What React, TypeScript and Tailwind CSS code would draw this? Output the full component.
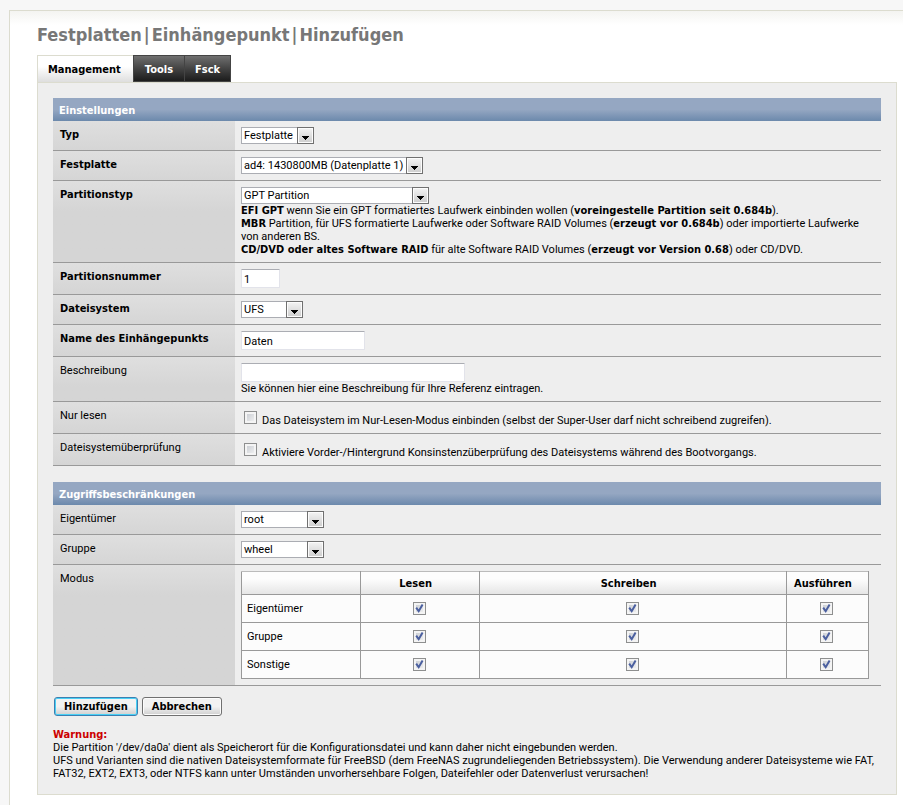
import type { ReactNode } from 'react';

const MODES = ['Eigentümer', 'Gruppe', 'Sonstige'];
const RIGHTS = ['Lesen', 'Schreiben', 'Ausführen'];

const Bold = ({ children }: { children: ReactNode }) => (
  <strong className="font-['DejaVu_Sans_Condensed',sans-serif] font-bold leading-none">{children}</strong>
);

type SelectProps = { id: string; options: string[]; width: string };

const Select = ({ id, options, width }: SelectProps) => (
  <span className={`relative block h-[17px] ${width}`}>
    <select
      id={id}
      className="block h-full w-full appearance-none border border-[#abadb3] bg-white pl-[2px] pr-[17px] pt-px leading-[14px] outline-none"
    >
      {options.map((option) => (
        <option key={option}>{option}</option>
      ))}
    </select>
    <span className="pointer-events-none absolute inset-y-0 right-0 flex w-[17px] items-end justify-center border border-[#707070] bg-linear-to-b from-[#f4f4f4] to-[#cdcdcd] pb-[3px] shadow-[inset_0_0_0_1px_#fcfcfc]">
      <svg width="7" height="4" viewBox="0 0 7 4" aria-hidden="true">
        <path d="M0 0h7v1h-1v1h-1v1h-1v1h-1v-1h-1v-1h-1v-1h-1z" fill="#000" />
      </svg>
    </span>
  </span>
);

type TextInputProps = { id: string; value?: string; width: string };

const TextInput = ({ id, value, width }: TextInputProps) => (
  <input
    id={id}
    type="text"
    defaultValue={value}
    className={`block h-[19px] rounded-[1px] border border-[#e2e3ea] border-t-[#abadb3] bg-white px-[2px] pt-px outline-none ${width}`}
  />
);

type CheckboxProps = { id?: string; label?: string; checked?: boolean };

const Checkbox = ({ id, label, checked }: CheckboxProps) => (
  <span className="relative block size-[13px] shrink-0">
    <input
      id={id}
      type="checkbox"
      aria-label={label}
      defaultChecked={checked}
      className="peer block size-[13px] appearance-none border border-[#8e8f8f] bg-linear-to-br from-[#c4c8ce] to-[#f6f6f6] shadow-[inset_0_0_0_2px_#f4f4f4]"
    />
    <svg
      viewBox="0 0 13 13"
      aria-hidden="true"
      className="pointer-events-none absolute inset-0 hidden size-[13px] peer-checked:block"
    >
      <path d="M3.2 5.6 5.7 9.2 9.6 2.6" fill="none" stroke="#4a5f9f" strokeWidth="2" />
    </svg>
  </span>
);

const SectionTitle = ({ children }: { children: ReactNode }) => (
  <h2 className="flex h-[23px] items-center bg-linear-to-b from-[#95a7c2] from-50% to-[#6c89ac] px-[6px] pt-px text-white">
    <Bold>{children}</Bold>
  </h2>
);

type RowProps = { label: string; id?: string; required?: boolean; children: ReactNode };

const Row = ({ label, id, required, children }: RowProps) => (
  <div className="flex border-b border-[#999]">
    <div className="w-[182px] shrink-0 bg-[#d5d5d5] bg-linear-to-b from-[#dfdfdf] to-[#d5d5d5] to-[30px] px-[7px] pb-[5px] pt-[7px]">
      {id ? <label htmlFor={id}>{required ? <Bold>{label}</Bold> : label}</label> : label}
    </div>
    <div className="min-w-0 grow p-[6px]">{children}</div>
  </div>
);

const ModeTable = () => (
  <table className="w-[99%] table-fixed border-collapse bg-[#fcfcfc]">
    <colgroup>
      <col className="w-[19%]" />
      <col className="w-[19%]" />
      <col className="w-[49%]" />
      <col className="w-[13%]" />
    </colgroup>
    <thead>
      <tr className="h-[23px] bg-linear-to-b from-[#fdfdfd] from-30% to-[#e4e4e4]">
        <th className="border border-[#999] border-t-[#bbb]" />
        {RIGHTS.map((right) => (
          <th key={right} className="border border-[#999] border-t-[#bbb] pr-[9px]">
            <Bold>{right}</Bold>
          </th>
        ))}
      </tr>
    </thead>
    <tbody>
      {MODES.map((mode) => (
        <tr key={mode} className="h-[28px]">
          <td className="border border-[#999] px-[5px]">{mode}</td>
          {RIGHTS.map((right) => (
            <td key={right} className="border border-[#999] pr-[2px]">
              <div className="flex justify-center">
                <Checkbox label={`${mode} ${right}`} checked />
              </div>
            </td>
          ))}
        </tr>
      ))}
    </tbody>
  </table>
);

const Tabs = () => (
  <nav className="flex h-[27px] text-white">
    <a
      href="#management"
      className="flex items-center border-l border-t border-[#dcdccf] bg-linear-to-b from-white from-40% to-[#dedede] pl-[10px] pr-[12px] text-black"
    >
      <Bold>Management</Bold>
    </a>
    <a
      href="#tools"
      className="flex items-center border border-[#444] bg-linear-to-b from-[#707070] to-[#1c1c1c] px-[11px] pt-px"
    >
      <Bold>Tools</Bold>
    </a>
    <a
      href="#fsck"
      className="flex items-center border border-l-0 border-[#444] bg-linear-to-b from-[#707070] to-[#1c1c1c] px-[10px] pt-px"
    >
      <Bold>Fsck</Bold>
    </a>
  </nav>
);

const App = () => (
  <div className="min-h-screen bg-[#f7f7f7] pl-[9px] pt-[10px] font-[Roboto,sans-serif] text-[11px] leading-[13px] text-black">
    <main className="min-h-[795px] border-l border-t border-[#dcdccf] bg-white bg-linear-to-b from-[#f4f4f1] to-white to-[14px] pl-[27px] pr-[6px] pt-[12px]">
      <h1 className="h-[32px] text-[18px] leading-[23px] text-[#777]">
        <Bold>
          Festplatten<span className="mx-[2px]">|</span>Einhängepunkt<span className="mx-[2px]">|</span>Hinzufügen
        </Bold>
      </h1>
      <Tabs />
      <form className="border border-[#dcdccf] bg-[#eee] px-[15px] pb-[14px] pt-[15px]">
        <section>
          <SectionTitle>Einstellungen</SectionTitle>
          <Row id="type" label="Typ" required>
            <Select id="type" options={['Festplatte']} width="w-[73px]" />
          </Row>
          <Row id="disk" label="Festplatte" required>
            <Select id="disk" options={['ad4: 1430800MB (Datenplatte 1)']} width="w-[182px]" />
          </Row>
          <Row id="parttype" label="Partitionstyp" required>
            <Select id="parttype" options={['GPT Partition']} width="w-[188px]" />
            <p>
              <Bold>EFI GPT</Bold> wenn Sie ein GPT formatiertes Laufwerk einbinden wollen (
              <Bold>voreingestelle Partition seit 0.684b</Bold>).
              <br />
              <Bold>MBR</Bold> Partition, für UFS formatierte Laufwerke oder Software RAID Volumes (
              <Bold>erzeugt vor 0.684b</Bold>) oder importierte Laufwerke von anderen BS.
              <br />
              <Bold>CD/DVD oder altes Software RAID</Bold> für alte Software RAID Volumes (
              <Bold>erzeugt vor Version 0.68</Bold>) oder CD/DVD.
            </p>
          </Row>
          <Row id="partnum" label="Partitionsnummer" required>
            <TextInput id="partnum" value="1" width="w-[39px]" />
          </Row>
          <Row id="fs" label="Dateisystem" required>
            <Select id="fs" options={['UFS']} width="w-[62px]" />
          </Row>
          <Row id="share" label="Name des Einhängepunkts" required>
            <TextInput id="share" value="Daten" width="w-[124px]" />
          </Row>
          <Row id="desc" label="Beschreibung">
            <TextInput id="desc" width="w-[224px]" />
            <p>Sie können hier eine Beschreibung für Ihre Referenz eintragen.</p>
          </Row>
          <Row id="readonly" label="Nur lesen">
            <div className="flex h-[19px] items-center gap-[5px] pl-[3px]">
              <Checkbox id="readonly" />
              <label htmlFor="readonly" className="pt-[5px]">
                Das Dateisystem im Nur-Lesen-Modus einbinden (selbst der Super-User darf nicht schreibend zugreifen).
              </label>
            </div>
          </Row>
          <Row id="fsck" label="Dateisystemüberprüfung">
            <div className="flex h-[19px] items-center gap-[5px] pl-[3px]">
              <Checkbox id="fsck" />
              <label htmlFor="fsck" className="pt-[5px]">
                Aktiviere Vorder-/Hintergrund Konsinstenzüberprüfung des Dateisystems während des Bootvorgangs.
              </label>
            </div>
          </Row>
        </section>

        <section className="mt-[16px]">
          <SectionTitle>Zugriffsbeschränkungen</SectionTitle>
          <Row id="owner" label="Eigentümer">
            <Select id="owner" options={['root']} width="w-[83px]" />
          </Row>
          <Row id="group" label="Gruppe">
            <Select id="group" options={['wheel']} width="w-[83px]" />
          </Row>
          <Row label="Modus">
            <ModeTable />
          </Row>
        </section>

        <div className="mt-[11px] flex gap-[4px] pl-px">
          <button
            type="submit"
            className="h-[19px] rounded-[3px] border border-[#3c7fb1] bg-linear-to-b from-[#f2f2f2] from-50% to-[#cfcfcf] px-[9px] shadow-[inset_0_0_0_1px_#48d0f5]"
          >
            <Bold>Hinzufügen</Bold>
          </button>
          <button
            type="button"
            className="h-[19px] rounded-[3px] border border-[#707070] bg-linear-to-b from-[#f2f2f2] from-50% to-[#cfcfcf] px-[9px] shadow-[inset_0_0_0_1px_#fcfcfc]"
          >
            <Bold>Abbrechen</Bold>
          </button>
        </div>

        <div className="mt-[12px]">
          <p className="text-[#cc0000]">
            <Bold>Warnung:</Bold>
          </p>
          <p>Die Partition '/dev/da0a' dient als Speicherort für die Konfigurationsdatei und kann daher nicht eingebunden werden.</p>
          <p>
            UFS und Varianten sind die nativen Dateisystemformate für FreeBSD (dem FreeNAS zugrundeliegenden
            Betriebssystem). Die Verwendung anderer Dateisysteme wie FAT, FAT32, EXT2, EXT3, oder NTFS kann unter
            Umständen unvorhersehbare Folgen, Dateifehler oder Datenverlust verursachen!
          </p>
        </div>
      </form>
    </main>
  </div>
);

export default App;
